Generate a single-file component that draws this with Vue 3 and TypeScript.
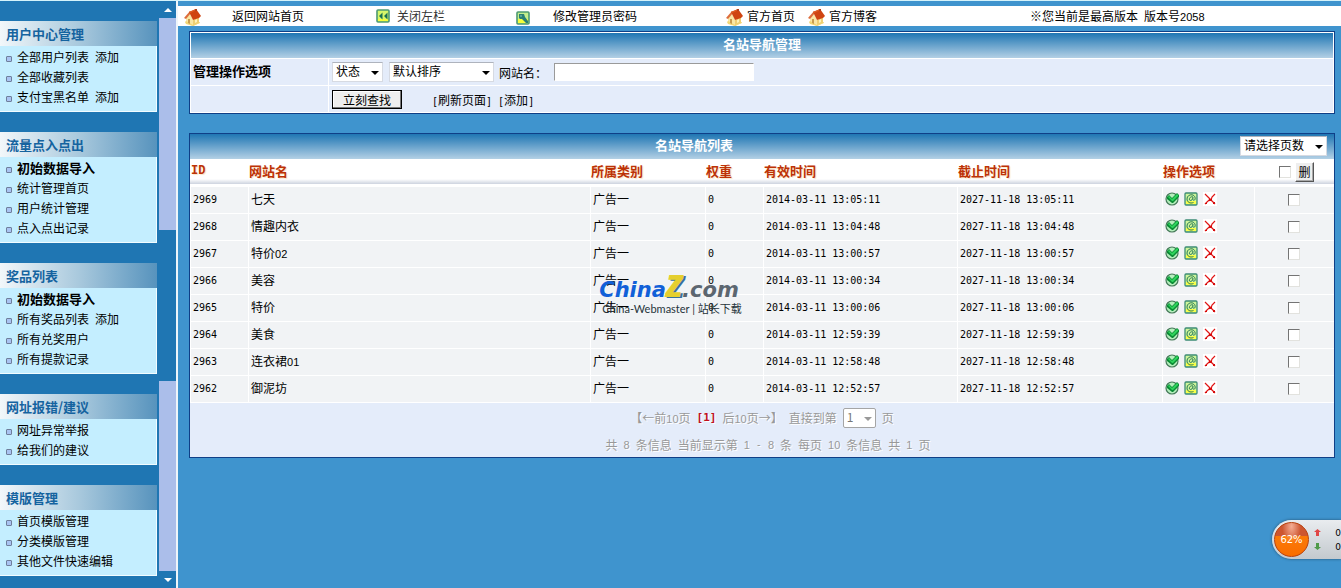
<script setup lang="ts">
import { ref } from 'vue'

interface MenuItem { text: string; extra?: string; strong?: boolean }
interface MenuGroup { title: string; items: MenuItem[] }
interface Site { id: number; name: string; suffix?: string; start: string; end: string }

const groups: MenuGroup[] = [
  { title: '用户中心管理', items: [{ text: '全部用户列表', extra: '添加' }, { text: '全部收藏列表' }, { text: '支付宝黑名单', extra: '添加' }] },
  { title: '流量点入点出', items: [{ text: '初始数据导入', strong: true }, { text: '统计管理首页' }, { text: '用户统计管理' }, { text: '点入点出记录' }] },
  { title: '奖品列表', items: [{ text: '初始数据导入', strong: true }, { text: '所有奖品列表', extra: '添加' }, { text: '所有兑奖用户' }, { text: '所有提款记录' }] },
  { title: '网址报错/建议', items: [{ text: '网址异常举报' }, { text: '给我们的建议' }] },
  { title: '模版管理', items: [{ text: '首页模版管理' }, { text: '分类模版管理' }, { text: '其他文件快速编辑' }] },
]

const sites: Site[] = [
  { id: 2969, name: '七天', start: '2014-03-11 13:05:11', end: '2027-11-18 13:05:11' },
  { id: 2968, name: '情趣内衣', start: '2014-03-11 13:04:48', end: '2027-11-18 13:04:48' },
  { id: 2967, name: '特价', suffix: '02', start: '2014-03-11 13:00:57', end: '2027-11-18 13:00:57' },
  { id: 2966, name: '美容', start: '2014-03-11 13:00:34', end: '2027-11-18 13:00:34' },
  { id: 2965, name: '特价', start: '2014-03-11 13:00:06', end: '2027-11-18 13:00:06' },
  { id: 2964, name: '美食', start: '2014-03-11 12:59:39', end: '2027-11-18 12:59:39' },
  { id: 2963, name: '连衣裙', suffix: '01', start: '2014-03-11 12:58:48', end: '2027-11-18 12:58:48' },
  { id: 2962, name: '御泥坊', start: '2014-03-11 12:52:57', end: '2027-11-18 12:52:57' },
]

const selected = ref<number[]>([])
const keyword = ref('')

function toggleAll(event: Event) {
  selected.value = (event.target as HTMLInputElement).checked ? sites.map((s) => s.id) : []
}
</script>

<template>
  <svg class="defs" aria-hidden="true">
    <symbol id="house" viewBox="0 0 17 17">
      <path d="M2 9 L6 5 L9 11 L9 17 L2 14 Z" fill="#fae7a4" />
      <path d="M9 11 L15 8 L15 14 L9 17 Z" fill="#efcf74" />
      <path d="M1 13 L2 12 L9 16 L16 13 L16 14 L9 17 L2 15 Z" fill="#f3d774" />
      <path d="M4 10 H6 V15 L4 14 Z" fill="#c99c50" />
      <path d="M11 11 L13 10 V13 L11 14 Z" fill="#fff3b8" />
      <path d="M0 9 L6 2 L7 4 L2 10 Z" fill="#dd6d3c" />
      <path d="M5 3 L12 0 L17 7 L15 9 L9 11 Z" fill="#cf4411" />
      <path d="M5 3 L12 0 L13 1 L6 4 Z" fill="#de5c24" />
      <path d="M11 0 H13 V2 H11 Z" fill="#b3401a" />
    </symbol>
    <symbol id="rewind" viewBox="0 0 14 14">
      <rect x="1" y="1" width="12" height="12" rx="1" fill="#d6f76a" stroke="#4d9a72" stroke-width="1.6" />
      <path d="M2 10 H12 V12 H2 Z" fill="#f6ff3c" />
      <path d="M6.5 3.5 L3 7 L6.500 10.500 Z M11.500 3.500 L8 7 L11.500 10.500 Z" fill="#187052" />
    </symbol>
    <symbol id="key" viewBox="0 0 14 14">
      <rect x="1" y="1" width="12" height="12" rx="1" fill="#c5ef8c" stroke="#4d9a72" stroke-width="1.6" />
      <path d="M2 8 H12 V12 H2 Z" fill="#f6ff3c" />
      <path d="M3 3 H8 L9 6 L12 10 V12 H10 L6 8 H4 L3 7 Z" fill="#2b7f74" />
      <path d="M4 5 H6" stroke="#8cc5bd" />
    </symbol>
    <symbol id="ok" viewBox="0 0 14 14">
      <circle cx="7" cy="7" r="6" fill="#b4efbc" stroke="#467a59" stroke-width="1.200" />
      <path d="M2 5 L4 3 L7 6 L12 1 L14 3 V5 L8 11 H7 L2 7 Z" fill="#0a8b34" />
      <path d="M3 5 L4 4 L7 7 L12 2 L13 3 V4 L8 9 H7 Z" fill="#2fd45c" />
    </symbol>
    <symbol id="edit" viewBox="0 0 14 14">
      <rect x="1" y="1" width="12" height="12" rx="1" fill="#cdf59a" stroke="#3d8c74" stroke-width="1.300" />
      <path d="M2 9 H12 V12 H2 Z" fill="#f8ff4a" />
      <path d="M9.500 10.500 C6 12 3 10 3 7 C3 4 5.500 2.500 8 2.800 C11 3.200 12 7 10.500 8 C9 9 8.500 7.500 9 5 C7 4 5 6 5.500 8 C6.500 9 8 8.500 8.600 6.500" fill="none" stroke="#2b7c58" stroke-width="1" />
    </symbol>
    <symbol id="remove" viewBox="0 0 14 14">
      <rect width="14" height="14" fill="#fff" />
      <path d="M2 2 L7 7 L12 12 M12 2 L9 5 L8 8 L5 9 L2 12" fill="none" stroke="#e01515" stroke-width="1.200" />
      <path d="M6 7 H9 V9 H5 Z M10 10 H12 V12 H10 Z M2 11 H4 V12 H2 Z" fill="#d60b0b" />
    </symbol>
  </svg>

  <div class="page">
    <aside class="sidebar">
      <nav class="menu">
        <section v-for="g in groups" :key="g.title" class="group">
          <h2>{{ g.title }}</h2>
          <ul>
            <li v-for="item in g.items" :key="item.text">
              <i class="dot"></i>
              <a href="#" :class="{ strong: item.strong }">{{ item.text }}</a>
              <a v-if="item.extra" href="#">{{ item.extra }}</a>
            </li>
          </ul>
        </section>
      </nav>
      <div class="scroll">
        <button type="button" class="step" aria-label="向上滚动"><i class="tri up"></i></button>
        <div class="track before"></div>
        <div class="thumb"></div>
        <div class="track after"></div>
        <button type="button" class="step" aria-label="向下滚动"><i class="tri"></i></button>
      </div>
    </aside>

    <main class="main">
      <header class="toolbar">
        <a href="#" class="tool far"><svg class="house"><use href="#house" /></svg>返回网站首页</a>
        <a href="#" class="tool near dim"><svg class="icon"><use href="#rewind" /></svg>关闭左栏</a>
        <a href="#" class="tool mid"><svg class="icon low"><use href="#key" /></svg>修改管理员密码</a>
        <div class="pair">
          <a href="#" class="tool"><svg class="house"><use href="#house" /></svg>官方首页</a>
          <a href="#" class="tool"><svg class="house"><use href="#house" /></svg>官方博客</a>
        </div>
        <p class="version"><span>※您当前是最高版本</span><span>版本号<b class="num">2058</b></span></p>
      </header>

      <form class="panel filter" @submit.prevent>
        <h1 class="bar">名站导航管理</h1>
        <div class="line">
          <strong class="label">管理操作选项</strong>
          <div class="fields">
            <span class="drop state"><select aria-label="状态"><option>状态</option></select></span>
            <span class="drop order"><select aria-label="默认排序"><option>默认排序</option></select></span>
            <label for="site">网站名：</label>
            <input id="site" v-model="keyword" type="text" class="text" />
          </div>
        </div>
        <div class="line">
          <span class="label"></span>
          <div class="fields">
            <button type="submit" class="search">立刻查找</button>
            <span class="links">
              <a href="#"><b class="mono">[</b>刷新页面<b class="mono">]</b></a>
              <a href="#"><b class="mono">[</b>添加<b class="mono">]</b></a>
            </span>
          </div>
        </div>
      </form>

      <section class="panel list">
        <div class="bar split">
          <h1>名站导航列表</h1>
          <div class="side"><span class="drop pages"><select aria-label="请选择页数"><option>请选择页数</option></select></span></div>
        </div>
        <table>
          <colgroup>
            <col class="c-id" /><col /><col class="c-cat" /><col class="c-weight" />
            <col class="c-start" /><col class="c-end" /><col class="c-ops" /><col class="c-check" />
          </colgroup>
          <thead>
            <tr>
              <th class="latin">ID</th><th>网站名</th><th>所属类别</th><th>权重</th>
              <th>有效时间</th><th>截止时间</th><th>操作选项</th>
              <th class="all">
                <div>
                  <input type="checkbox" aria-label="全选" @change="toggleAll" />
                  <button type="button" class="del">删</button>
                </div>
              </th>
            </tr>
          </thead>
          <tbody>
            <tr v-for="s in sites" :key="s.id">
              <td class="mono">{{ s.id }}</td>
              <td>{{ s.name }}<span v-if="s.suffix" class="num">{{ s.suffix }}</span></td>
              <td>广告一</td>
              <td class="mono">0</td>
              <td class="mono">{{ s.start }}</td>
              <td class="mono">{{ s.end }}</td>
              <td>
                <div class="ops">
                  <a href="#" aria-label="审核"><svg class="icon"><use href="#ok" /></svg></a>
                  <a href="#" aria-label="编辑"><svg class="icon"><use href="#edit" /></svg></a>
                  <a href="#" aria-label="删除"><svg class="icon"><use href="#remove" /></svg></a>
                </div>
              </td>
              <td class="pick"><input v-model="selected" type="checkbox" :value="s.id" :aria-label="`选择 ${s.id}`" /></td>
            </tr>
          </tbody>
        </table>
        <footer class="pager">
          <div class="row first">
            <span>【←前<b class="num">10</b>页</span>
            <a href="#" class="current">[1]</a>
            <span>后<b class="num">10</b>页→】</span>
            <label for="jump">直接到第</label>
            <span class="drop jump"><select id="jump"><option>1</option></select></span>
            <span>页</span>
          </div>
          <div class="row">
            <span>共</span><b class="num">8</b><span>条信息</span><span>当前显示第</span><b class="num">1</b><b class="mono">-</b><b class="num">8</b><span>条</span><span>每页</span><b class="num">10</b><span>条信息</span><span>共</span><b class="num">1</b><span>页</span>
          </div>
        </footer>
      </section>
    </main>

    <div class="mark">
      <div>
        <p class="brand"><span class="china">China</span><span class="zed">Z</span><span class="com">.com</span></p>
        <p class="sub">China-Webmaster | <span>站长下载</span></p>
      </div>
    </div>

    <div class="meter">
      <div class="ball">62%</div>
      <div class="rates">
        <p><svg viewBox="0 0 7 7"><path d="M3.500 0 L7 3 H5 V7 H2 V3 H0 Z" fill="#e04646" /></svg>0</p>
        <p><svg viewBox="0 0 7 7"><path d="M3.500 7 L7 4 H5 V0 H2 V4 H0 Z" fill="#4f9a48" /></svg>0</p>
      </div>
    </div>
  </div>
</template>

<style>
body {
  margin: 0;
  background: #3f94ce;
}
</style>

<style scoped>
* { box-sizing: border-box; }
h1, h2, p, ul { margin: 0; padding: 0; }
a { color: inherit; text-decoration: none; }
select, input, button { font: inherit; color: inherit; margin: 0; border-radius: 0; }
.defs { position: absolute; width: 0; height: 0; }
.page {
  position: relative;
  display: flex;
  min-height: 100vh;
  overflow: hidden;
  border-top: 1px solid #d4f3fb;
  background: #3f94ce;
  color: #000;
  font: 12px/20px "Noto Sans CJK SC", sans-serif;
}
.num { font: 11px/12px "Liberation Sans", sans-serif; }
.mono { font: 10px/12px "DejaVu Sans Mono", monospace; }
.icon { display: block; width: 14px; height: 14px; flex: none; }
.house { display: block; width: 17px; height: 17px; flex: none; margin-top: 3px; }
.low { margin-top: 3px; }

.sidebar { display: flex; gap: 2px; width: 178px; flex: none; background: #1f76b3; border-right: 2px solid #eef5fa; }
.menu { display: flex; flex-direction: column; gap: 20px; flex: 1; padding: 20px 0 12px; }
.group h2 {
  height: 25px;
  padding-left: 6px;
  font-size: 13px;
  line-height: 25px;
  color: #15639f;
  background: linear-gradient(90deg, #f2f7fa, #a9c9dd 50%, #5793bd);
}
.group ul { list-style: none; padding: 1px 0 4px; background: #c4eeff; border: solid #f2fcff; border-width: 0 1px 1px 0; }
.group li { display: flex; align-items: center; gap: 6px; height: 20px; padding-left: 6px; white-space: nowrap; }
.dot { width: 6px; height: 6px; margin: 3px -1px 0 0; border: 1px solid #6f7f9c; border-radius: 1px; background: #a9c3f2; }
.strong { font-size: 13px; font-weight: bold; }

.scroll { display: flex; flex-direction: column; width: 17px; flex: none; }
.step { display: grid; place-items: center; height: 17px; padding: 0; border: 0; background: #1f76b3; }
.tri { border: solid transparent; border-width: 4px 4px 0; border-top-color: #fff; }
.tri.up { border-width: 0 4px 4px; border-bottom-color: #fff; }
.track { background: #abbeea; }
.before { flex: 212; }
.thumb { flex: 151; background: #1f76b3; }
.after { flex: 190; }

.main { flex: 1; min-width: 0; padding-top: 5px; }
.toolbar {
  display: grid;
  grid-template-columns: 192fr 140fr 210fr 304fr 311fr;
  height: 20px;
  padding-left: 6px;
  background: #fff;
  white-space: nowrap;
}
.tool { display: flex; align-items: center; gap: 4px; }
.far { gap: 31px; }
.near { gap: 7px; }
.mid { gap: 23px; }
.dim { color: #333; }
.pair { display: flex; gap: 13px; line-height: 18px; }
.version { display: flex; gap: 6px; }

.panel { margin: 5px 6px 0 11px; border: 1px solid #0f3f87; background: #e4ecfa; }
.bar {
  height: 25px;
  font-size: 13px;
  line-height: 22px;
  font-weight: bold;
  text-align: center;
  color: #fff;
  background: linear-gradient(#1f76b3, #b3d0e5);
}
.filter { padding: 1px; box-shadow: inset 0 0 0 1px #fff; }
.line { display: flex; height: 27px; border-top: 1px solid #fff; }
.label { width: 138px; padding-left: 2px; border-right: 1px solid #fff; line-height: 24px; font-size: 13px; }
.fields { display: flex; align-items: center; padding-left: 3px; white-space: nowrap; }

.drop { position: relative; display: block; font-size: 12px; font-weight: normal; color: #000; }
.drop::after {
  content: "";
  position: absolute;
  right: 4px;
  top: 9px;
  border: solid transparent;
  border-width: 4px 4px 0;
  border-top-color: currentColor;
  pointer-events: none;
}
.drop select {
  display: block;
  width: 100%;
  height: 20px;
  padding: 0 0 2px 3px;
  appearance: none;
  line-height: 16px;
  background: #fff;
  border: 1px solid #d6dae2;
  border-top-color: #aeb3bd;
}
.state { width: 51px; margin-right: 6px; }
.order { width: 105px; margin-right: 5px; }
.fields label { width: 55px; padding-top: 2px; }
.text { width: 200px; height: 18px; padding: 0 3px; background: #fff; border: 1px solid #fff; border-top-color: #9a9a9a; border-left-color: #9a9a9a; }
.search { width: 70px; height: 19px; padding: 0; line-height: 15px; background: #eee; border: 1px solid #000; box-shadow: inset -1px -1px #777, inset 1px 1px #fff; }
.links { display: flex; gap: 6px; padding: 2px 0 0 30px; }

.list { margin-top: 19px; }
.split { display: flex; }
.split h1 { flex: 1; font-size: 13px; }
.side { display: flex; justify-content: flex-end; align-items: flex-start; width: 136px; padding: 2px 7px 0 0; }
.pages { width: 87px; }
table { width: 100%; table-layout: fixed; border-collapse: separate; border-spacing: 0; background: #f1f3f5; }
.c-id { width: 58px; }
.c-cat { width: 115px; }
.c-weight { width: 58px; }
.c-start { width: 194px; }
.c-end { width: 205px; }
.c-ops { width: 92px; }
.c-check { width: 80px; }
th {
  height: 28px;
  padding: 0 0 1px 1px;
  border-bottom: 3px solid #fff;
  text-align: left;
  font-size: 13px;
  line-height: 20px;
  color: #bd3206;
  text-shadow: 1px 1px 1px #f9e6c8;
  background: linear-gradient(#fff 80%, #cdd3df);
}
th.latin { font-family: "Liberation Mono", monospace; font-size: 12px; }
td { height: 27px; padding: 0 0 2px 2px; border: solid #fff; border-width: 0 0 1px 1px; line-height: 20px; white-space: nowrap; }
td.mono { padding-bottom: 0; }
th.all { padding: 0; }
.all div { display: flex; align-items: center; gap: 4px; padding-left: 25px; }
.del { width: 19px; height: 20px; padding: 0; line-height: 16px; background: #eee; border: 1px solid #fff; border-right-color: #555; border-bottom-color: #555; box-shadow: inset -1px -1px #aaa; font-size: 12px; font-weight: normal; color: #000; text-shadow: none; }
input[type="checkbox"] {
  appearance: none;
  display: block;
  width: 12px;
  height: 12px;
  background: #fff;
  border: 1px solid #e2e2de;
  border-top: 1px solid #747474;
  border-left: 1px solid #747474;
}
input[type="checkbox"]:checked { box-shadow: inset 0 0 0 2px #fff, inset 0 0 0 6px #333; }
.ops { display: flex; gap: 5px; }
.pick { padding: 0 1px 0 0; }
.pick input { margin: 0 auto; }

.pager { color: #999; }
.row { display: flex; justify-content: center; align-items: center; gap: 6px; height: 25px; padding-left: 12px; text-shadow: 1px 1px #fff; white-space: nowrap; }
.first { height: 29px; padding: 0; }
.current { font: bold 11px/14px "DejaVu Sans Mono", monospace; color: #c20e1c; }
.jump { width: 33px; color: #999; }
.jump select { color: #777; border: 1px solid #a5a5a5; border-radius: 2px; }

.mark { position: absolute; inset: 0; display: grid; place-items: center; pointer-events: none; }
.brand { display: flex; align-items: baseline; font: italic bold 21px/24px "DejaVu Sans", sans-serif; }
.china { color: #1160d8; }
.zed { font: italic 800 30px/24px "Open Sans", sans-serif; color: #e5cf2e; text-shadow: 2px 1px #37709c; }
.com { color: #5c6670; }
.sub { padding-left: 3px; font: 11px/12px Lato, sans-serif; color: #26333b; white-space: nowrap; }
.sub span { font: 11px/12px "Noto Sans CJK SC", sans-serif; }

.meter {
  position: absolute;
  right: 0;
  bottom: 29px;
  display: flex;
  align-items: center;
  gap: 5px;
  width: 69px;
  height: 39px;
  padding-left: 2px;
  border-radius: 20px 0 0 20px;
  background: linear-gradient(#e9ecef, #c3c9ce);
  box-shadow: 0 0 3px #23506f;
}
.ball {
  width: 35px;
  height: 35px;
  flex: none;
  border: 1px solid #b8400c;
  border-radius: 50%;
  text-align: center;
  font: 10px/33px "DejaVu Sans", sans-serif;
  color: #fff;
  background: radial-gradient(ellipse at 50% 10%, #f4ad94, transparent 40%), linear-gradient(#cd5630 38%, #fb7a08 39%, #f96d00);
}
.rates { flex: 1; font: 9px/14px "DejaVu Sans", sans-serif; }
.rates p { display: flex; align-items: center; justify-content: space-between; }
.rates svg { width: 7px; height: 7px; }
</style>
